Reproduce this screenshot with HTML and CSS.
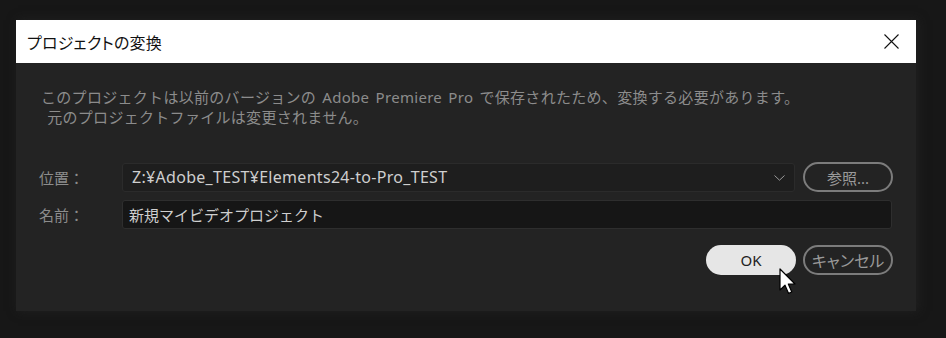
FILE: index.html
```html
<!DOCTYPE html>
<html>
<head>
  <title>プロジェクトの変換</title>
  <link rel="stylesheet" href="styles.css">
</head>
<body>
  <div class="dialog">
    <div class="title-bar">
      <span class="title">プロジェクトの変換</span>
      <button class="close-button" title="閉じる">
        <svg width="15" height="15" viewBox="0 0 15 15">
          <path d="M0.5 0.5 L14.5 14.5 M14.5 0.5 L0.5 14.5" stroke="#111" stroke-width="1.1" fill="none"/>
        </svg>
      </button>
    </div>
    <div class="body">
      <p class="message">このプロジェクトは以前のバージョンの Adobe Premiere Pro で保存されたため、変換する必要があります。<br>&nbsp;元のプロジェクトファイルは変更されません。</p>

      <div class="form">
        <div class="row">
          <label class="label">位置：</label>
          <div class="field select-field">
            <span class="field-text">Z:¥Adobe_TEST¥Elements24-to-Pro_TEST</span>
            <svg class="chevron" width="11" height="6" viewBox="0 0 11 6">
              <path d="M0.5 0.5 L5.5 5.2 L10.5 0.5" stroke="#9a9a9a" stroke-width="1" fill="none"/>
            </svg>
          </div>
          <button class="button outline-button">参照...</button>
        </div>
        <div class="row">
          <label class="label">名前：</label>
          <input type="text" class="field name-field" value="新規マイビデオプロジェクト">
        </div>
      </div>

      <div class="actions">
        <button class="button ok-button">OK</button>
        <button class="button outline-button cancel-button">キャンセル</button>
        <svg class="cursor" width="17" height="27" viewBox="0 0 17 27">
          <path d="M1 1 L1 22 L6 17.2 L9.6 25.4 L12.8 24 L9.3 16 L16 16 Z" fill="#fff" stroke="#000" stroke-width="1.2" stroke-linejoin="round"/>
        </svg>
      </div>
    </div>
  </div>
</body>
</html>
```

FILE: styles.css
```css
* {
  margin: 0;
  padding: 0;
  box-sizing: border-box;
}

html, body {
  width: 100%;
  height: 100%;
  background: #171717;
  overflow: hidden;
}

body {
  padding: 20px 0 0 16px;
  font-family: "Noto Sans", "Noto Sans CJK JP", sans-serif;
}

.dialog {
  width: 900px;
  height: 291px;
  background: #232323;
  display: flex;
  flex-direction: column;
  box-shadow: 2px 0 10px rgba(40, 40, 40, 0.6);
}

.title-bar {
  flex: 0 0 43px;
  background: #FFFFFF;
  display: flex;
  align-items: center;
  justify-content: space-between;
  padding: 0 17px 0 11px;
}

.title {
  font-size: 16px;
  color: #111;
  font-feature-settings: "palt";
  letter-spacing: 0.2px;
}

.close-button {
  background: none;
  border: none;
  width: 15px;
  height: 15px;
  display: flex;
}

.body {
  flex: 1;
  padding: 24px 23px 0 23px;
  display: flex;
  flex-direction: column;
}

.message {
  margin-left: 2px;
  font-size: 15px;
  line-height: 20px;
  color: #8c8c8c;
  letter-spacing: 0.3px;
  word-spacing: 2px;
}

.form {
  margin-top: 35px;
  display: flex;
  flex-direction: column;
  gap: 7px;
}

.row {
  display: flex;
  align-items: center;
  gap: 8px;
  height: 30px;
}

.label {
  width: 75px;
  font-size: 15px;
  color: #8c8c8c;
}

.field {
  height: 29px;
  border-radius: 3px;
  font-family: inherit;
  font-size: 15px;
  color: #cfcfcf;
}

.select-field {
  width: 673px;
  background: #1e1e1e;
  border: 1px solid #2b2b2b;
  display: flex;
  align-items: center;
  justify-content: space-between;
  padding: 0 9px 0 9px;
}

.field-text {
  font-size: 16px;
  letter-spacing: 0.3px;
}

.chevron {
  margin-top: 1px;
}

.name-field {
  width: 770px;
  background: #161616;
  border: 1px solid #2e2e2e;
  padding: 0 6px;
  outline: none;
}

.button {
  width: 90px;
  height: 30px;
  border-radius: 15px;
  font-family: inherit;
  font-size: 15px;
  display: flex;
  align-items: center;
  justify-content: center;
}

.outline-button {
  background: none;
  border: 2px solid #7c7c7c;
  color: #9a9a9a;
}

.actions {
  position: relative;
  margin-top: 16px;
  display: flex;
  justify-content: flex-end;
  gap: 7px;
}

.ok-button {
  background: #e6e6e6;
  border: none;
  color: #222;
}

.cancel-button {
  font-size: 16px;
  font-feature-settings: "palt";
}

.cursor {
  position: absolute;
  left: 740px;
  top: 23px;
}
```
